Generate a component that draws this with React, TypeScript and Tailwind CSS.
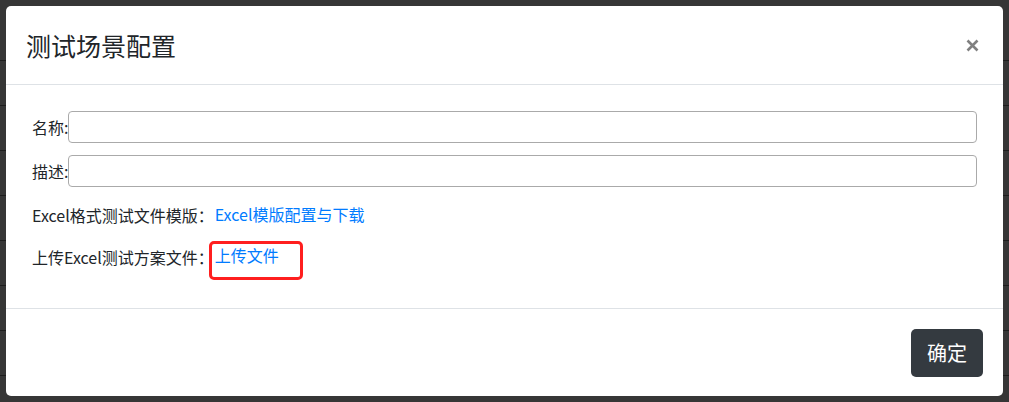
import React from 'react';

const BG_ROWS = Array.from({ length: 9 }, (_, i) => i);

export default function App() {
  return (
    <div className="relative h-[402px] w-[1009px] overflow-hidden bg-white font-['Noto_Sans_CJK_SC',sans-serif] text-[#212529]">
      {/* Page behind the dialog */}
      <div className="flex flex-col pt-[16px]">
        {BG_ROWS.map((i) => (
          <div key={i} className="h-[45px] border-b border-[#888]" />
        ))}
      </div>

      {/* Backdrop */}
      <div className="absolute inset-0 bg-[rgba(0,0,0,0.79)]" />

      {/* Modal */}
      <div className="absolute left-[6px] top-[6px] flex h-[390px] w-[997px] flex-col rounded-[5px] bg-white">
        {/* Header */}
        <div className="flex h-[79px] shrink-0 items-center justify-between border-b border-[#dee2e6] pl-[20px] pr-[24px]">
          <h4 className="text-[25px] leading-none font-normal text-[#212529]">测试场景配置</h4>
          <button className="flex h-[14px] w-[14px] items-center justify-center">
            <svg width="13" height="13" viewBox="0 0 13 13">
              <path d="M1.5 1.5 L11.5 11.5 M11.5 1.5 L1.5 11.5" stroke="#808080" strokeWidth="2.6" strokeLinecap="butt" />
            </svg>
          </button>
        </div>

        {/* Body */}
        <div className="flex h-[223px] shrink-0 flex-col px-[26px] pt-[26px] text-[16px]">
          <div className="flex h-[32px] items-center">
            <label className="leading-none">名称:</label>
            <input className="h-[32px] flex-1 rounded-[4px] border border-[#aaa] px-2 outline-none" />
          </div>
          <div className="mt-[12px] flex h-[32px] items-center">
            <label className="leading-none">描述:</label>
            <input className="h-[32px] flex-1 rounded-[4px] border border-[#aaa] px-2 outline-none" />
          </div>
          <div className="mt-[16px] flex h-[24px] items-center">
            <span className="leading-none">Excel格式测试文件模版：</span>
            <a className="ml-[1px] -mt-[3px] leading-none text-[#007bff]">Excel模版配置与下载</a>
          </div>
          <div className="mt-[18px] flex h-[24px] items-center">
            <span className="leading-none">上传Excel测试方案文件：</span>
            <span className="relative ml-[1px] -mt-[4px]">
              <a className="leading-none text-[#007bff]">上传文件</a>
              <span className="absolute -left-[6px] -top-[2px] h-[39px] w-[94px] rounded-[5px] border-[3px] border-[#ff1f1f]" />
            </span>
          </div>
        </div>

        {/* Footer */}
        <div className="flex flex-1 items-center justify-end border-t border-[#dee2e6] pr-[20px]">
          <button className="h-[48px] w-[72px] rounded-[5px] bg-[#343a40] text-[20px] leading-none text-white">确定</button>
        </div>
      </div>
    </div>
  );
}
